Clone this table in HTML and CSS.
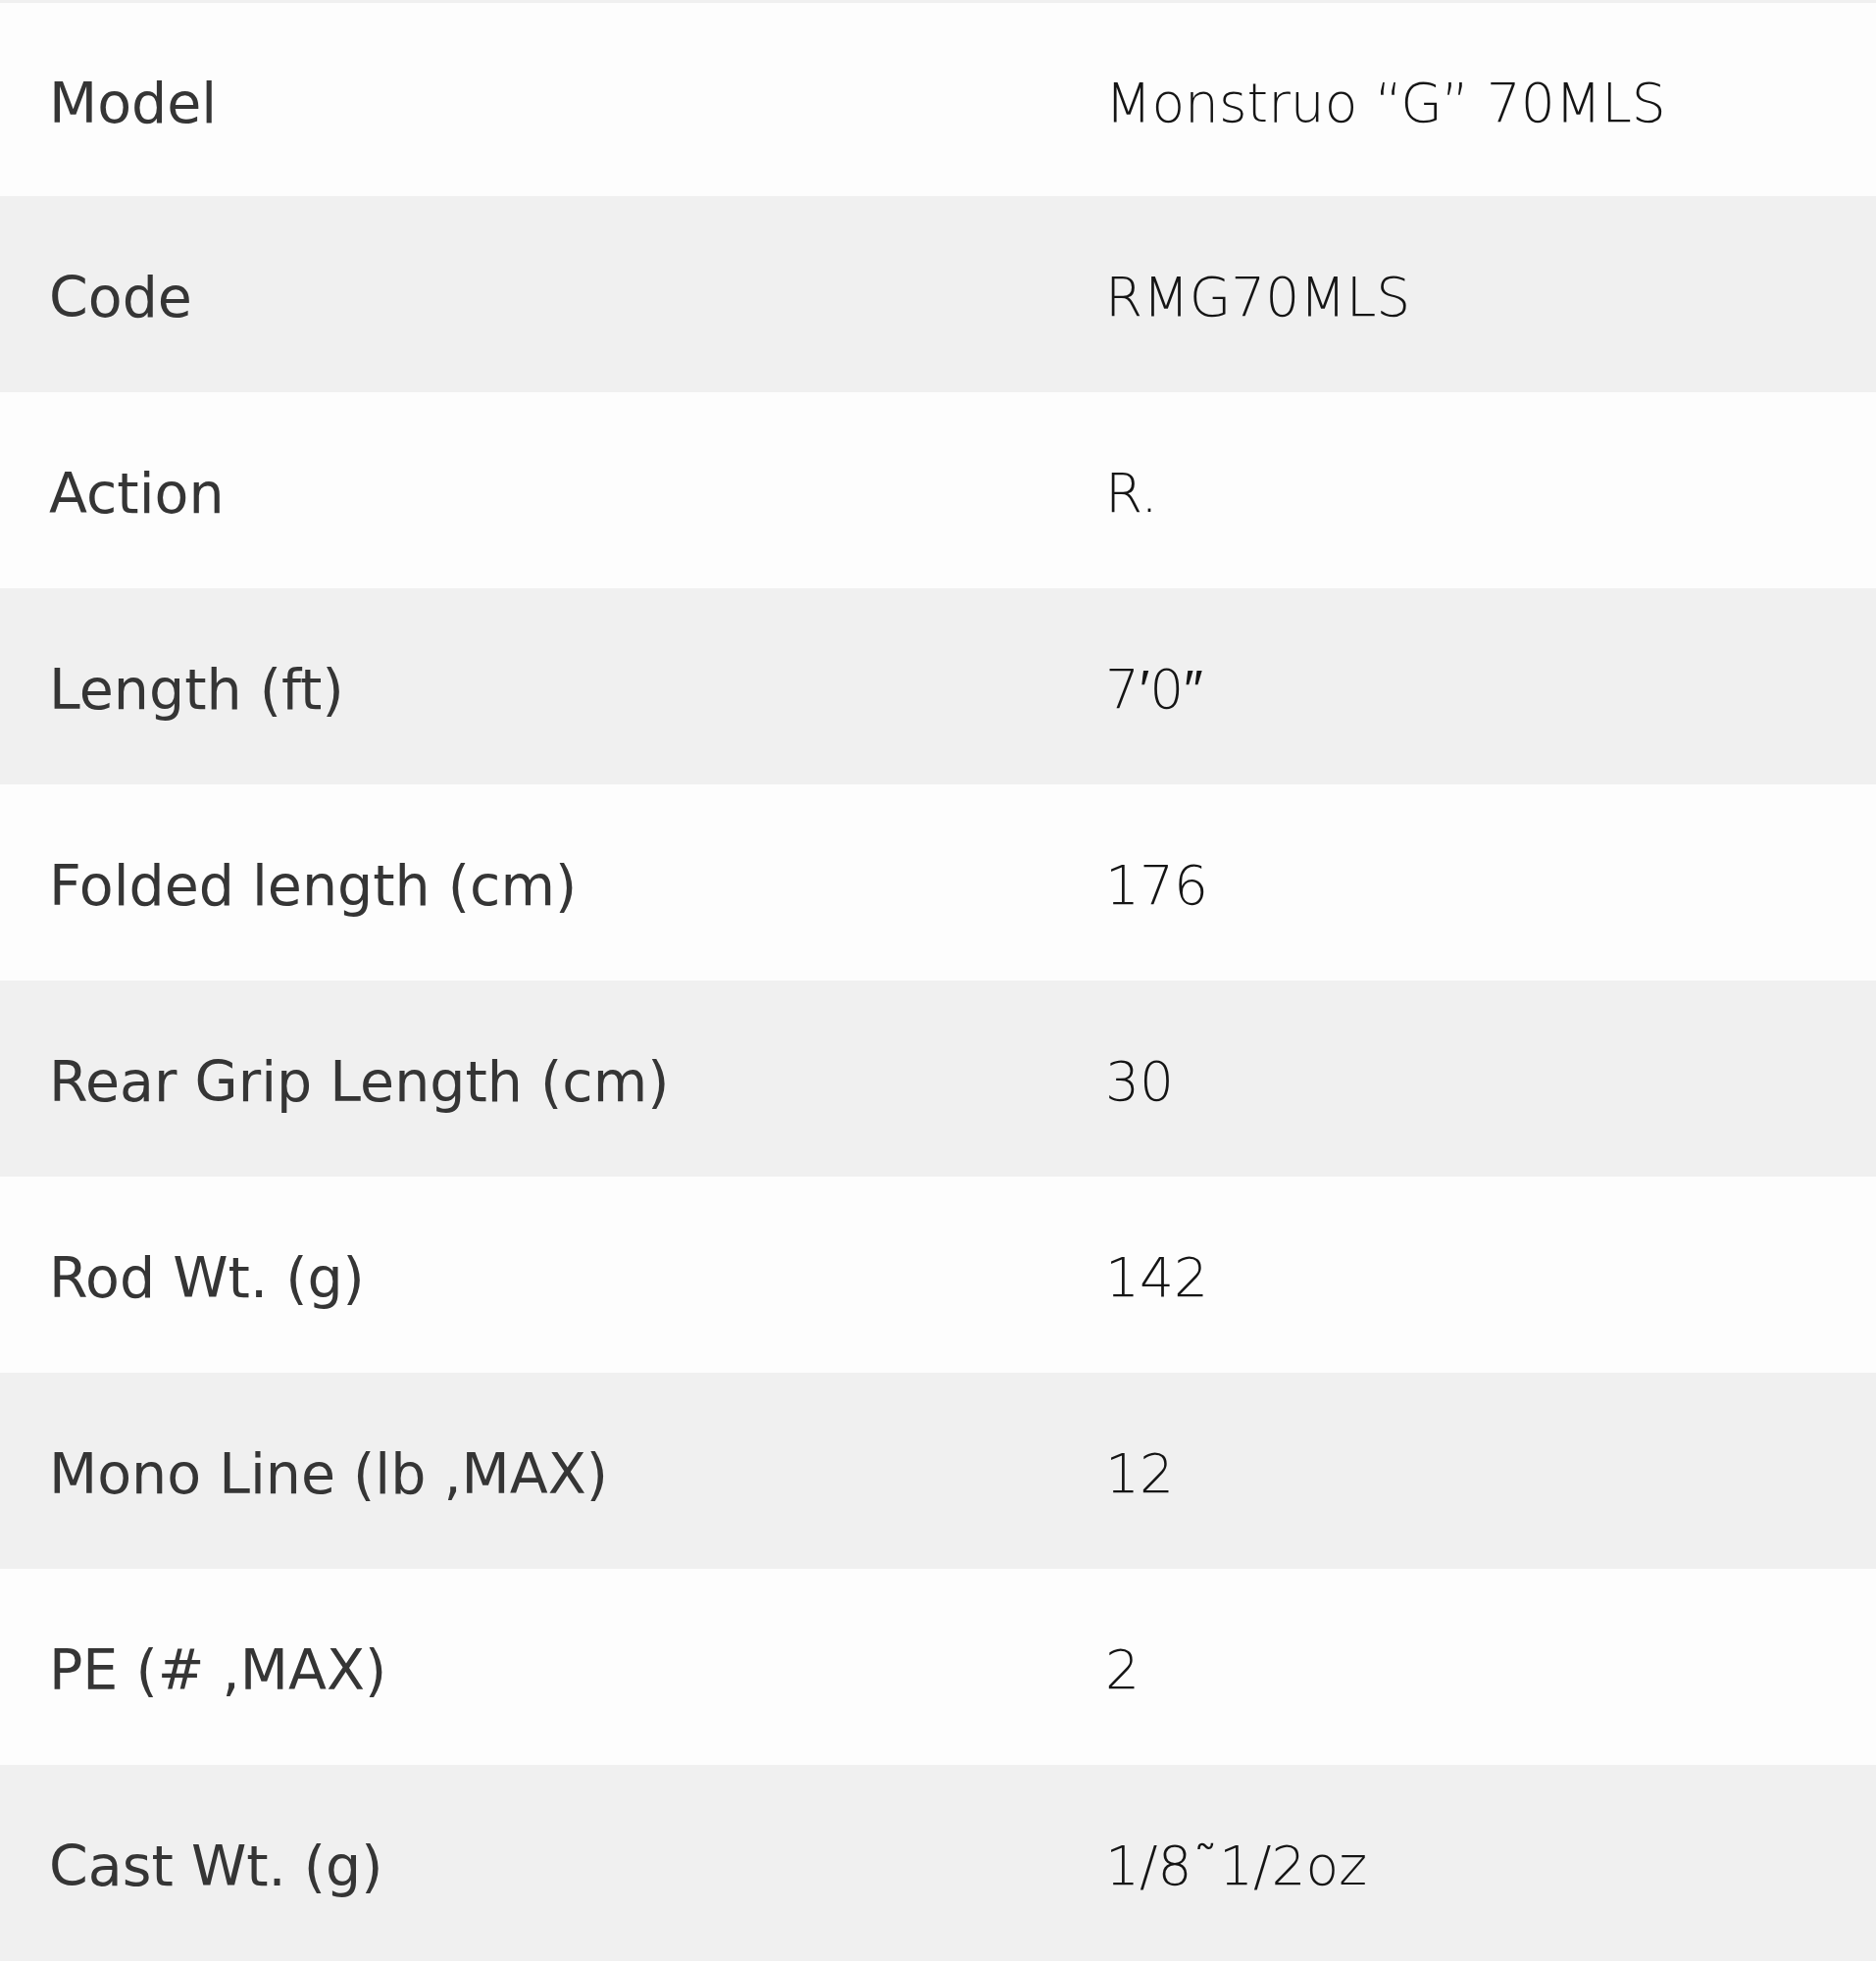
FILE: index.html
```html
<!DOCTYPE html>
<html>
<head>
<meta charset="utf-8">
<link rel="stylesheet" href="styles.css">
</head>
<body>
<div class="specs">
  <div class="row"><div class="label">Model</div><div class="value">Monstruo “G” 70MLS</div></div>
  <div class="row"><div class="label">Code</div><div class="value">RMG70MLS</div></div>
  <div class="row"><div class="label">Action</div><div class="value">R.</div></div>
  <div class="row"><div class="label">Length (ft)</div><div class="value">7′0″</div></div>
  <div class="row"><div class="label">Folded length (cm)</div><div class="value">176</div></div>
  <div class="row"><div class="label">Rear Grip Length (cm)</div><div class="value">30</div></div>
  <div class="row"><div class="label">Rod Wt. (g)</div><div class="value">142</div></div>
  <div class="row"><div class="label">Mono Line (lb ,MAX)</div><div class="value">12</div></div>
  <div class="row"><div class="label">PE (# ,MAX)</div><div class="value">2</div></div>
  <div class="row"><div class="label">Cast Wt. (g)</div><div class="value">1/8˜1/2oz</div></div>
</div>
</body>
</html>
```
FILE: styles.css
```css
html, body {
  margin: 0;
  padding: 0;
  background: #fdfdfd;
}
.specs {
  width: 1913px;
  display: flex;
  flex-direction: column;
  border-top: 3px solid #f0f0f0;
  font-family: "DejaVu Sans", sans-serif;
  color: #333;
}
.row {
  display: grid;
  grid-template-columns: 1080px 1fr;
  height: 200px;
  align-items: center;
  background: #fdfdfd;
}
.row:first-child {
  height: 197px;
}
.row:nth-child(even) {
  background: #f0f0f0;
}
.label {
  padding-left: 50px;
  padding-top: 6px;
  font-size: 57px;
  color: #353535;
}
.value {
  padding-left: 47px;
  padding-top: 6px;
  font-size: 55px;
  font-weight: 200;
  color: #151515;
}
```
